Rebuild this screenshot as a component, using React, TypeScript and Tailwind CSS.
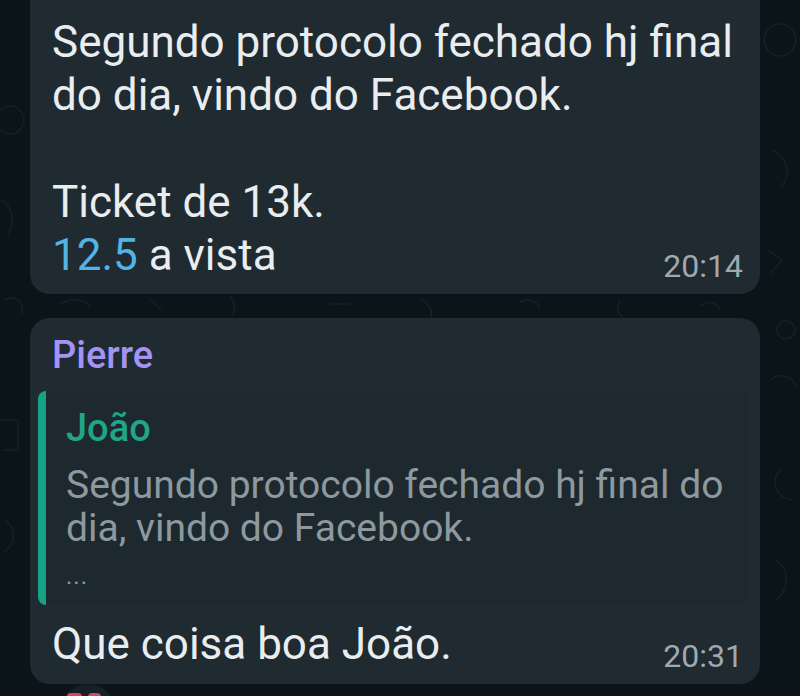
import React from 'react';

const font = { fontFamily: 'Roboto, "Noto Sans", sans-serif' };

const Doodles = () => (
  <svg className="absolute inset-0 w-full h-full" viewBox="0 0 800 696" fill="none" stroke="#152027" strokeWidth="1.5">
    <circle cx="10" cy="120" r="14" />
    <path d="M2 200c10 8 14 20 6 34M4 300c12-6 20 2 18 14" />
    <path d="M0 420h18v30H2M6 520c10 10 10 24-2 32" />
    <circle cx="780" cy="40" r="16" />
    <path d="M772 150c14 6 20 22 10 36M768 250l14 10-12 14" />
    <circle cx="786" cy="330" r="9" />
    <path d="M770 380c10-8 24-4 26 8M780 470c-10 12-4 28 12 30M776 560c14 10 14 28 0 40" />
    <path d="M60 304c10-6 22-6 30 2M150 300l12 10M230 296c6 8 6 16 0 24M330 304h20M420 298c10 6 14 14 10 24M520 302c8-4 16-2 20 6M620 300c-4 8-2 16 6 20M700 306c8-6 16-4 20 4" />
  </svg>
);

const Time = ({ children }: { children: React.ReactNode }) => (
  <span className="text-[32px] leading-[36px] text-[#9ea9b0] shrink-0 translate-y-[2px]">{children}</span>
);

export default function App() {
  return (
    <div className="relative w-[800px] h-[696px] overflow-hidden bg-[#0b1419]" style={font}>
      <Doodles />
      <div className="absolute left-[40px] top-[-6px] w-[7px] h-[13px] rounded-b-full bg-[#7cb342]" />

      <div className="relative flex flex-col gap-[24px] pl-[30px] pr-[40px]">
        <div className="mt-[-40px] rounded-[20px] bg-[#1f2a31] pt-[56px] pb-[12px] pl-[22px] pr-[17px] text-[44px] leading-[53.3px] text-[#e9edef]">
          <p>Segundo protocolo fechado hj final</p>
          <p>do dia, vindo do Facebook.</p>
          <p>&nbsp;</p>
          <p>Ticket de 13k.</p>
          <div className="flex items-end justify-between">
            <p>
              <span className="text-[#53b4e3]">12.5</span> a vista
            </p>
            <Time>20:14</Time>
          </div>
        </div>

        <div className="rounded-[20px] bg-[#1f2a31] pt-[15px] pb-[12px] pl-[8px] pr-[17px]">
          <p className="pl-[14px] text-[38px] leading-[44px] font-medium text-[#a493f3]">Pierre</p>
          <div className="mt-[14px] flex rounded-[10px] bg-[#1d282f] mr-[-5px]">
            <div className="w-[8px] rounded-l-[10px] bg-[#14a485]" />
            <div className="pl-[20px] pt-[15px] pb-[7px]">
              <p className="text-[38px] leading-[44px] font-medium text-[#1fa587]">João</p>
              <p className="mt-[14px] text-[39px] leading-[43px] text-[#8e999f]">
                Segundo protocolo fechado hj final do
                <br />
                dia, vindo do Facebook.
                <br />
                <span className="text-[24px] tracking-[1px]">...</span>
              </p>
            </div>
          </div>
          <div className="mt-[13px] pl-[14px] flex items-end justify-between text-[44px] leading-[53.3px] text-[#e9edef]">
            <p>Que coisa boa João.</p>
            <Time>20:31</Time>
          </div>
        </div>
      </div>

      <div className="absolute left-[60px] top-[684px] w-[56px] h-[56px] rounded-full bg-[#162026]">
        <div className="absolute left-[7px] top-[9px] w-[15px] h-[8px] rounded-full bg-[#d9475e]" />
        <div className="absolute left-[28px] top-[9px] w-[13px] h-[8px] rounded-full bg-[#d9475e]" />
      </div>
    </div>
  );
}
